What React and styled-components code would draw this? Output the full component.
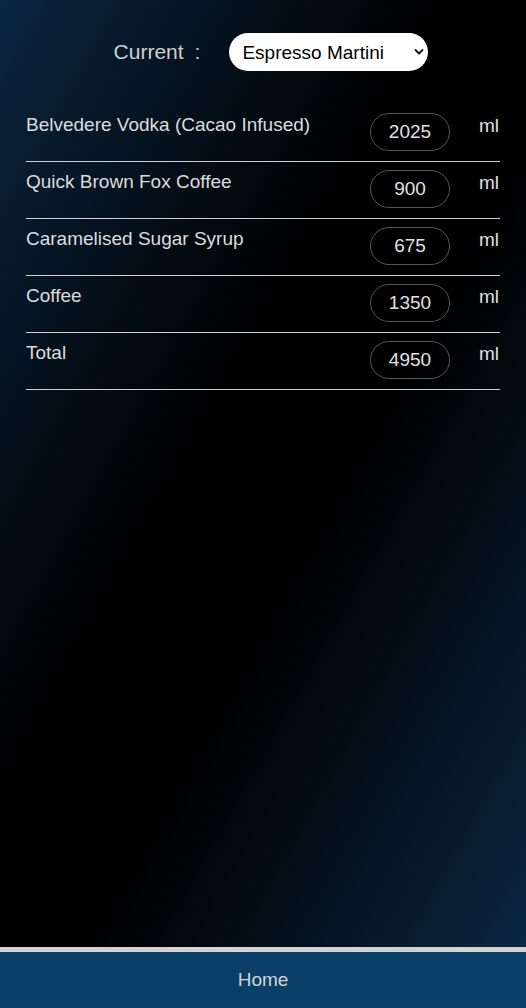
import React from "react";
import styled, { createGlobalStyle } from "styled-components";

const Global = createGlobalStyle`
  html, body { margin: 0; padding: 0; background: #000; }
  body { font-family: "Liberation Sans", Arial, sans-serif; }
  * { box-sizing: border-box; }
`;

const Page = styled.div`
  min-height: 100vh;
  display: flex;
  flex-direction: column;
`;

const Main = styled.main`
  flex: 1;
  padding: 33px 26px 0;
  background: linear-gradient(to bottom right, #0b2640 0%, #000 42%, #000 58%, #0b2640 100%);
`;

const Header = styled.div`
  display: flex;
  justify-content: center;
  align-items: center;
  padding-left: 16px;
  height: 38px;
`;

const CurrentLabel = styled.span`
  font-size: 21px;
  color: #cfcfcf;
  margin-right: 29px;
  white-space: nowrap;
`;

const Colon = styled.span`
  margin-left: 11px;
`;

const SelectWrap = styled.div`
  position: relative;
  width: 199px;
  height: 38px;
`;

const Select = styled.select`
  appearance: none;
  -webkit-appearance: none;
  width: 100%;
  height: 100%;
  border: none;
  border-radius: 19px;
  background: #fff;
  color: #000;
  font-family: "Liberation Sans", Arial, sans-serif;
  font-size: 19px;
  padding: 0 0 0 13px;
  outline: none;
`;

const Chevron = styled.svg`
  position: absolute;
  right: 4px;
  top: 15px;
  width: 10px;
  height: 8px;
  pointer-events: none;
`;

const List = styled.div`
  margin-top: 34px;
  display: flex;
  flex-direction: column;
`;

const Row = styled.div`
  display: flex;
  align-items: flex-start;
  padding: 8px 0 10px;
  border-bottom: 1px solid #cfcfcf;
`;

const Label = styled.div`
  flex: 1;
  margin-top: 1px;
  font-size: 19px;
  line-height: 22px;
  color: #dcdcdc;
`;

const Amount = styled.input`
  width: 80px;
  height: 38px;
  border: 1.5px solid #555;
  border-radius: 19px;
  background: transparent;
  color: #e0e0e0;
  text-align: center;
  font-family: "Liberation Sans", Arial, sans-serif;
  font-size: 19px;
  padding: 0;
  outline: none;
`;

const Unit = styled.div`
  width: 21px;
  margin-left: 29px;
  margin-top: 2px;
  font-size: 19px;
  line-height: 22px;
  color: #e0e0e0;
`;

const FooterLine = styled.div`
  height: 5px;
  background: #d2d2d2;
`;

const Footer = styled.footer`
  height: 56px;
  background: #0a3f68;
  display: flex;
  align-items: center;
  justify-content: center;
  color: #d4d4d4;
  font-size: 19px;
`;

const rows = [
  { name: "Belvedere Vodka (Cacao Infused)", value: "2025" },
  { name: "Quick Brown Fox Coffee", value: "900" },
  { name: "Caramelised Sugar Syrup", value: "675" },
  { name: "Coffee", value: "1350" },
  { name: "Total", value: "4950" },
];

export default function App() {
  return (
    <Page>
      <Global />
      <Main>
        <Header>
          <CurrentLabel>
            Current<Colon>:</Colon>
          </CurrentLabel>
          <SelectWrap>
            <Select defaultValue="Espresso Martini">
              <option>Espresso Martini</option>
            </Select>
            <Chevron viewBox="0 0 10 8">
              <path d="M1.5 2 L5 5.5 L8.5 2" fill="none" stroke="#111" strokeWidth="1.8" strokeLinecap="round" strokeLinejoin="round" />
            </Chevron>
          </SelectWrap>
        </Header>
        <List>
          {rows.map((r) => (
            <Row key={r.name}>
              <Label>{r.name}</Label>
              <Amount defaultValue={r.value} readOnly />
              <Unit>ml</Unit>
            </Row>
          ))}
        </List>
      </Main>
      <FooterLine />
      <Footer>Home</Footer>
    </Page>
  );
}
